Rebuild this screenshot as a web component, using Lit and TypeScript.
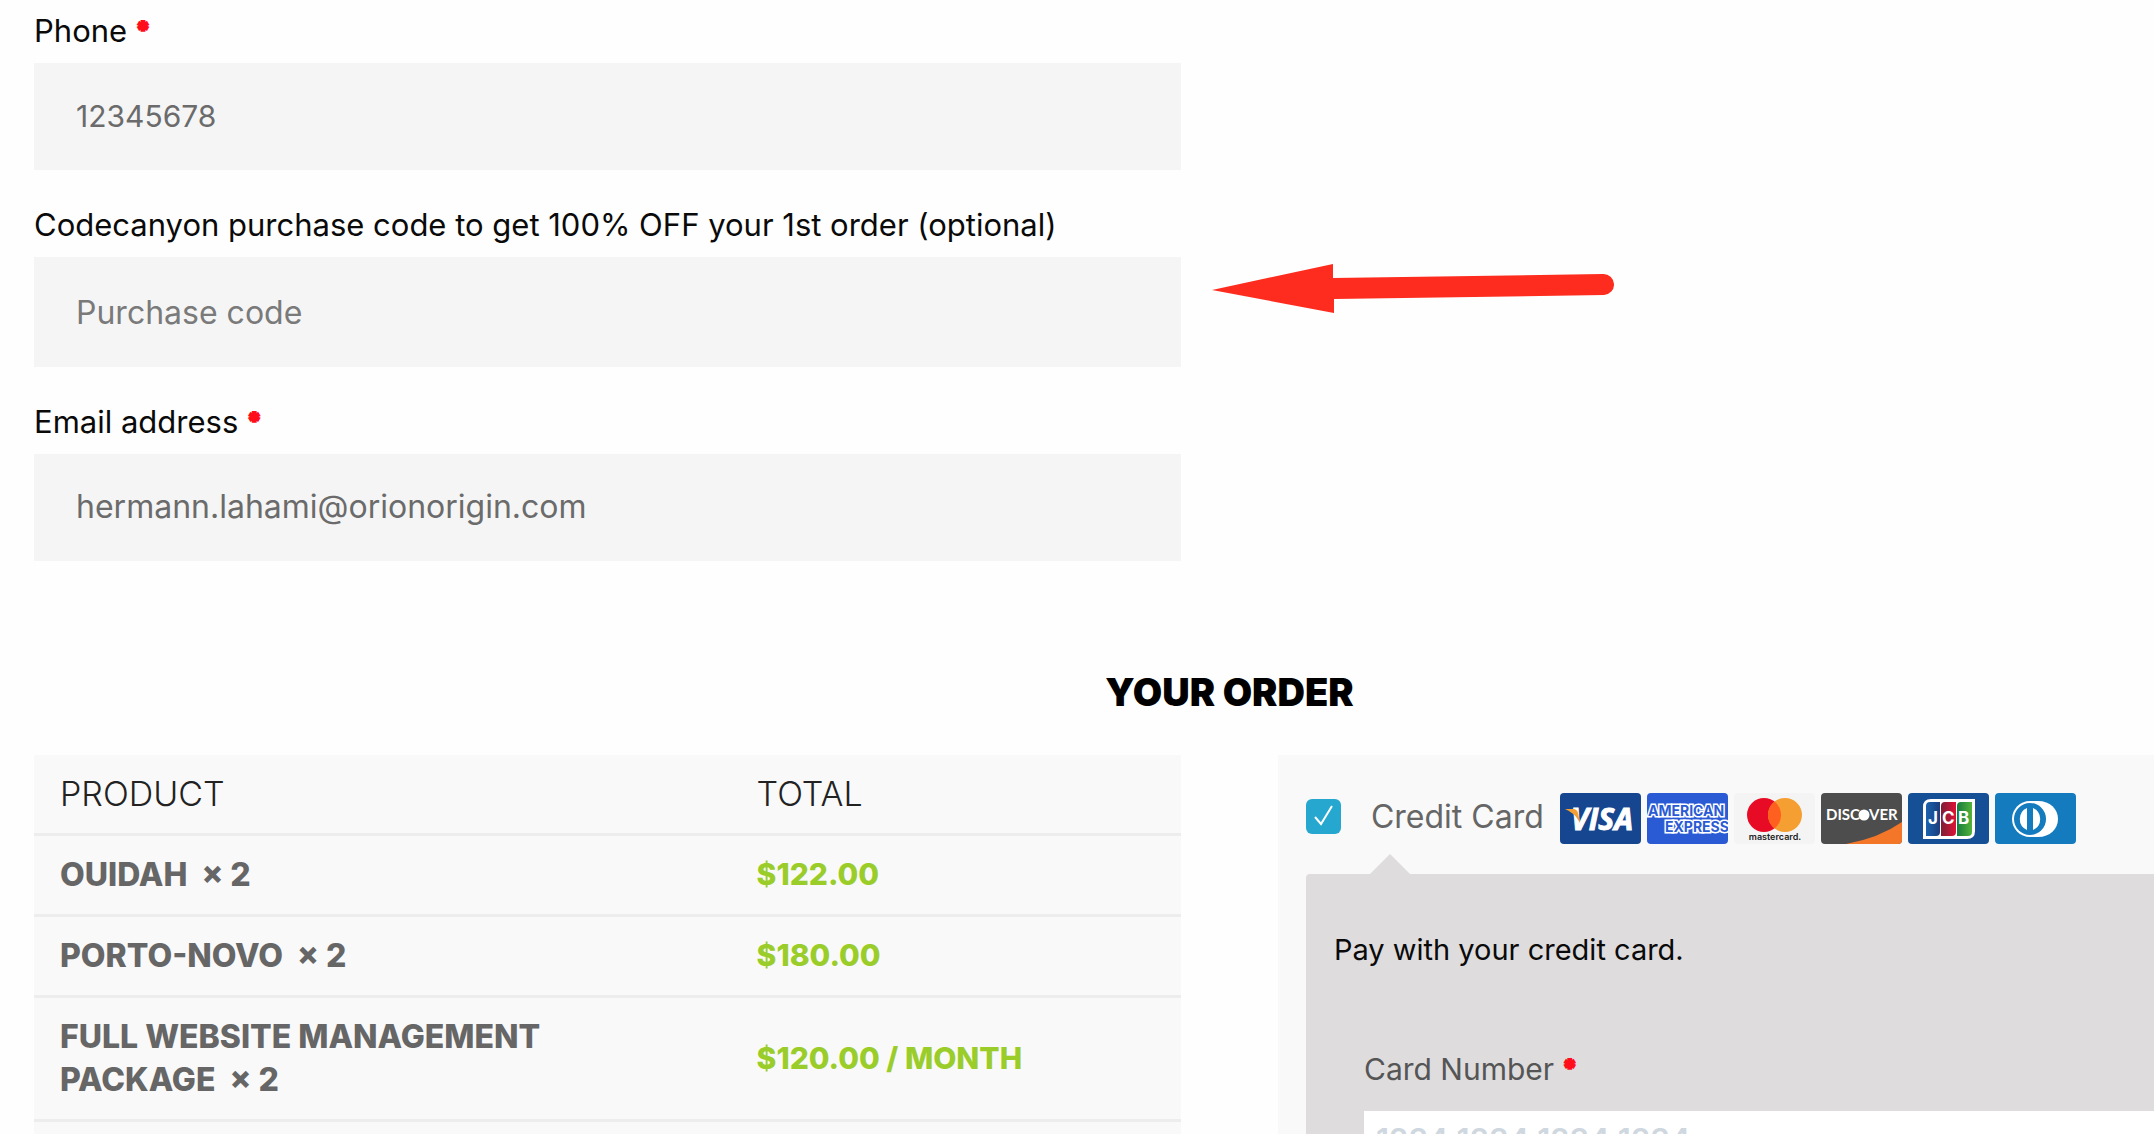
import { LitElement, html, css, svg } from "lit";
import { customElement, property } from "lit/decorators.js";

@customElement("card-brands")
class CardBrands extends LitElement {
  static styles = css`
    :host { display: flex; gap: 6px; }
    .card { display: block; width: 81px; height: 51px; border-radius: 4px; }
    .sans { font-family: "Open Sans", sans-serif; font-weight: 700; }
    .inter { font-family: Inter, sans-serif; font-weight: 700; }
    .light { font-weight: 600; }
    .lato { font-family: Lato, sans-serif; font-weight: 700; }
  `;

  private card(name: string, fill: string, art: unknown) {
    return html`<svg class="card" viewBox="0 0 81 51" role="img" aria-label=${name}>
      <rect width="81" height="51" fill=${fill}></rect>${art}
    </svg>`;
  }

  render() {
    return html`
      ${this.card("Visa", "#15468f", svg`
        <text class="sans" x="11" y="37" font-size="30" font-style="italic" fill="#fff" stroke="#fff" stroke-width="1">VISA</text>
        <path d="M5 16H13Q17 16 18 20L20 30Q15 20 5 16Z" fill="#f2a036"></path>`)}
      ${this.card("American Express", "#2a5bd5", svg`
        <g class="inter" font-size="14" fill="#2a5bd5" stroke="#fff" stroke-width="3" paint-order="stroke" stroke-linejoin="miter">
          <text x="1" y="23">AMERICAN</text>
          <text x="18" y="39">EXPRESS</text>
        </g>`)}
      ${this.card("Mastercard", "#f4f4f4", svg`
        <circle cx="30" cy="22" r="17" fill="#e80b26"></circle>
        <circle cx="51" cy="22" r="17" fill="#f59e31"></circle>
        <path d="M40.5 8.6A17 17 0 0 1 40.5 35.4A17 17 0 0 1 40.5 8.6Z" fill="#ff5f1f"></path>
        <text class="inter light" x="41" y="47" font-size="9" text-anchor="middle" fill="#222">mastercard.</text>`)}
      ${this.card("Discover", "#4d4d4d", svg`
        <path d="M25 51Q58 45 81 29V51Z" fill="#f47629"></path>
        <g class="lato" font-size="15" fill="#fff">
          <text x="5" y="27">DISC</text>
          <text x="48" y="27">VER</text>
        </g>
        <circle cx="43" cy="22" r="5.5" fill="#fff"></circle>`)}
      ${this.card("JCB", "#154f95", svg`
        <defs>
          <linearGradient id="b"><stop stop-color="#1a62ae"></stop><stop offset="1" stop-color="#1b3d7d"></stop></linearGradient>
          <linearGradient id="r"><stop stop-color="#7b2034"></stop><stop offset="1" stop-color="#df1238"></stop></linearGradient>
          <linearGradient id="g"><stop stop-color="#167b3e"></stop><stop offset="1" stop-color="#53b43a"></stop></linearGradient>
        </defs>
        <path d="M23 6H67V38Q67 46 59 46H15V14Q15 6 23 6Z" fill="#fff"></path>
        <path d="M22 9H32V39Q32 43 28 43H18V13Q18 9 22 9Z" fill="url(#b)"></path>
        <path d="M37 9H48V39Q48 43 44 43H33V13Q33 9 37 9Z" fill="url(#r)"></path>
        <path d="M53 9H64V39Q64 43 60 43H49V13Q49 9 53 9Z" fill="url(#g)"></path>
        <text class="inter" y="31" font-size="17" fill="#fff"><tspan x="20">J</tspan><tspan x="34">C</tspan><tspan x="50">B</tspan></text>`)}
      ${this.card("Diners Club", "#147bbf", svg`
        <path d="M35 8H43C55 8 63 16 63 26S55 44 43 44H35C25 44 17 36 17 26S25 8 35 8Z" fill="#fff"></path>
        <circle cx="35" cy="26" r="16" fill="#147bbf"></circle>
        <path d="M32 15A12 12 0 0 0 32 37ZM38 15A12 12 0 0 1 38 37Z" fill="#fff"></path>`)}
    `;
  }
}

@customElement("billing-field")
class BillingField extends LitElement {
  @property() label = "";
  @property() value = "";
  @property() placeholder = "";
  @property() type = "text";
  @property({ type: Boolean }) required = false;
  @property({ type: Boolean }) highlighted = false;

  static styles = css`
    :host { display: block; position: relative; }
    .label { display: block; margin-bottom: 11px; font-size: 31px; line-height: 42px; color: #0a0a0a; white-space: nowrap; }
    .mark { color: #ff0d1b; font-weight: 900; font-size: 24px; line-height: 0; vertical-align: 3px; -webkit-text-stroke: 2px #ff0d1b; }
    .input {
      display: block; width: 100%; box-sizing: border-box; border: 0; border-radius: 0; margin: 0;
      padding: 31px 42px 33px; background: #f5f5f5; color: #6b6b6b;
      font-family: inherit; font-size: 32px; line-height: 43px; height: 107px;
    }
    .input[type="tel"] { font-size: 30px; }
    .input::placeholder { color: #7a7a7a; opacity: 1; }
    .tall { height: 110px; padding-top: 33px; }
    .arrow { position: absolute; left: calc(100% + 31px); bottom: 54px; width: 402px; height: 49px; }
  `;

  render() {
    return html`
      <label class="label" for="control">${this.label}${this.required ? html` <span class="mark">*</span>` : ""}</label>
      <input id="control" class="input ${this.highlighted ? "tall" : ""}" type=${this.type}
        .value=${this.value} placeholder=${this.placeholder} ?required=${this.required}>
      ${this.highlighted ? html`<svg class="arrow" viewBox="0 0 402 49" aria-hidden="true">
        <path d="M0 26L121 0V14L391 10A10 10 0 0 1 392 31L122 35V49Z" fill="#fd2c1e"></path>
      </svg>` : ""}
    `;
  }
}

const ITEMS = [
  { name: "OUIDAH", quantity: 2, total: "$122.00" },
  { name: "PORTO-NOVO", quantity: 2, total: "$180.00" },
  { name: "FULL WEBSITE MANAGEMENT PACKAGE", quantity: 2, total: "$120.00 / MONTH" },
];

@customElement("app-root")
class AppRoot extends LitElement {
  static styles = css`
    :host { display: block; height: 100vh; overflow: hidden; background: #fefefe; font-family: Inter, "Open Sans", sans-serif; }
    .page { width: 111%; margin-left: 34px; padding-top: 10px; }
    .columns { display: grid; grid-template-columns: 1fr 1fr; gap: 97px; }
    .billing { display: flex; flex-direction: column; gap: 34px; }
    .title { margin: 109px 0 41px; font-size: 38px; line-height: 44px; font-weight: 900; text-align: center; color: #000; }
    .order { width: 100%; border-collapse: collapse; table-layout: fixed; background: #f9f9f9; align-self: start; }
    .cell { box-sizing: border-box; padding: 17px 26px 18px; border-bottom: 3px solid #ededed; text-align: left; font-size: 32px; line-height: 43px; font-weight: 800; color: #666; }
    .cell:last-child { padding-left: 0; }
    .head { font-size: 34px; font-weight: 300; color: #222; }
    .name { width: 63%; }
    .product { max-width: 540px; }
    .price { font-size: 30px; color: #9acd2a; }
    .spacer { height: 120px; padding: 0; }
    .payment { background: #f9f9f9; padding: 38px 28px 0; }
    .method { display: flex; align-items: center; height: 51px; }
    .tick { display: grid; width: 35px; height: 35px; margin-bottom: 4px; }
    .box { grid-area: 1 / 1; appearance: none; width: 35px; height: 35px; margin: 0; border-radius: 6px; background: #25a7d0; }
    .check { grid-area: 1 / 1; width: 35px; height: 35px; pointer-events: none; }
    .method-name { margin: 0 16px 4px 30px; font-size: 32px; line-height: 42px; color: #666; white-space: nowrap; }
    .details { position: relative; margin-top: 30px; padding: 55px 28px 120px; border-radius: 4px; background: #dedcdd; }
    .details::before { content: ""; position: absolute; left: 64px; bottom: 100%; border: solid transparent; border-width: 0 20px 20px; border-bottom-color: #dedcdd; }
    .note { margin: 0 0 77px; font-size: 29px; line-height: 42px; color: #0a0a0a; }
    .card-form { padding: 0 30px; }
    .card-label { display: block; margin-bottom: 21px; font-size: 30px; line-height: 42px; color: #555; }
    .mark { color: #ff0d1b; font-weight: 900; font-size: 24px; line-height: 0; vertical-align: 3px; -webkit-text-stroke: 2px #ff0d1b; }
    .card-input { display: block; width: 100%; box-sizing: border-box; height: 56px; border: 0; padding: 0 12px; background: #fff; font-family: inherit; font-size: 31px; font-weight: 600; }
    .card-input::placeholder { color: #cfd7df; opacity: 1; }
  `;

  render() {
    return html`
      <main class="page">
        <div class="columns">
          <section class="billing">
            <billing-field label="Phone" type="tel" value="12345678" required></billing-field>
            <billing-field label="Codecanyon purchase code to get 100% OFF your 1st order (optional)" placeholder="Purchase code" highlighted></billing-field>
            <billing-field label="Email address" type="email" value="hermann.lahami@orionorigin.com" required></billing-field>
          </section>
        </div>
        <h2 class="title">YOUR ORDER</h2>
        <div class="columns">
          <table class="order">
            <thead>
              <tr><th class="cell head name" scope="col">PRODUCT</th><th class="cell head" scope="col">TOTAL</th></tr>
            </thead>
            <tbody>
              ${ITEMS.map((item) => html`<tr>
                <td class="cell"><div class="product">${`${item.name}\u00a0\u00a0×\u00a0${item.quantity}`}</div></td>
                <td class="cell price">${item.total}</td>
              </tr>`)}
              <tr><td class="spacer" colspan="2"></td></tr>
            </tbody>
          </table>
          <section class="payment">
            <div class="method">
              <span class="tick">
                <input id="credit" class="box" type="checkbox" checked>
                <svg class="check" viewBox="0 0 35 35" aria-hidden="true"><path d="M9 18L15 25L26 7" fill="none" stroke="#fff" stroke-width="2"></path></svg>
              </span>
              <label class="method-name" for="credit">Credit Card</label>
              <card-brands></card-brands>
            </div>
            <div class="details">
              <p class="note">Pay with your credit card.</p>
              <div class="card-form">
                <label class="card-label" for="number">Card Number <span class="mark">*</span></label>
                <input id="number" class="card-input" inputmode="numeric" placeholder="1234 1234 1234 1234">
              </div>
            </div>
          </section>
        </div>
      </main>
    `;
  }
}
